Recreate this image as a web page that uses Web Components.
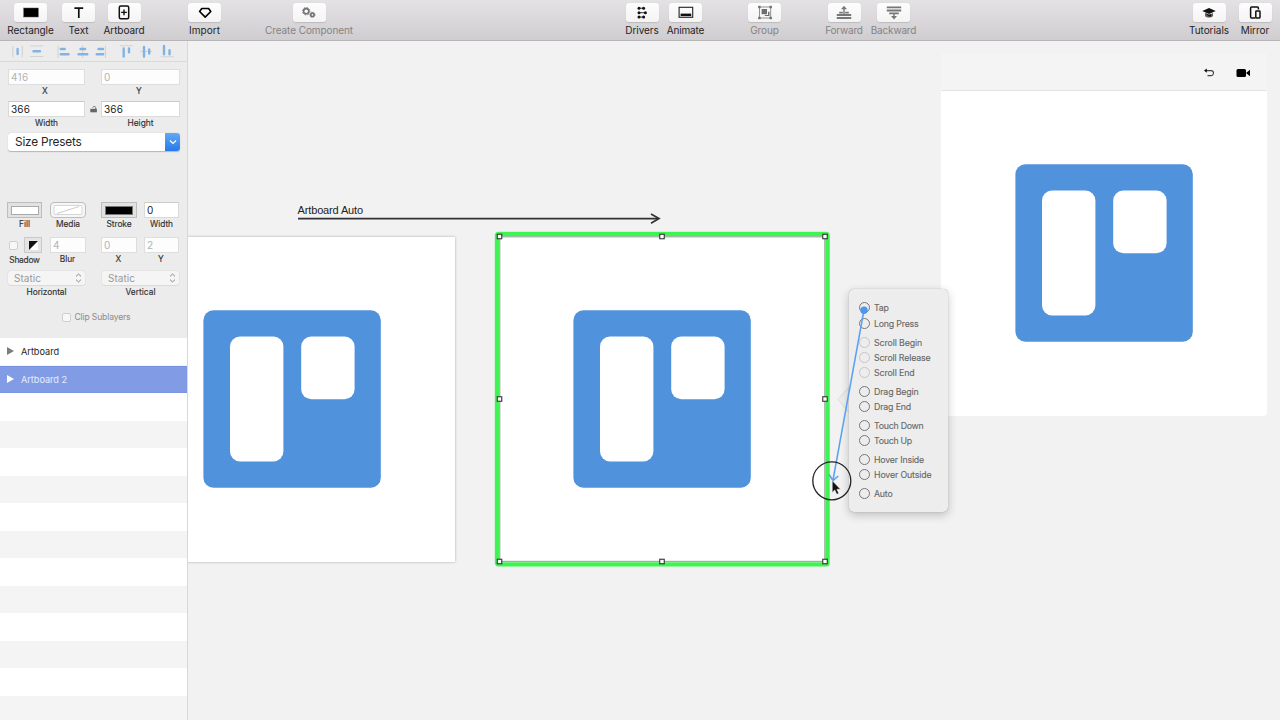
<!DOCTYPE html>
<html lang="en">
<head>
<meta charset="utf-8">
<title>Artboards</title>
<style>
    body {
        margin: 0;
        width: 1280px;
        height: 720px;
        overflow: hidden;
        background: #f2f2f2;
        font-family: Inter, "Liberation Sans", sans-serif;
        color: #262626;
    }
</style>
</head>
<body>
<design-app></design-app>

<script>
// text with a set width: the tracking is spread over the letters
class FitText extends HTMLElement {

    constructor() {
        super();
        this.root = this.attachShadow({mode: 'open'});
        this.root.innerHTML = `
        <style>
        :host {
            display: inline-block;
            white-space: nowrap;
        }
        span {
            display: inline-block;
        }
        </style>
        <span><slot></slot></span>
        `;
    }

    connectedCallback() {
        const span = this.root.querySelector('span');
        const target = Number(this.getAttribute('w'));
        const length = this.textContent.length;
        if (!target || !length) return;
        const spacing = (target - span.getBoundingClientRect().width) / length;
        span.style.letterSpacing = spacing.toFixed(3) + 'px';
    }
}

class ToolButton extends HTMLElement {

    constructor() {
        super();
        this.root = this.attachShadow({mode: 'open'});
    }

    connectedCallback() {
        this.root.innerHTML = `
        <style>
        :host {
            display: flex;
            flex-direction: column;
            align-items: center;
            flex: none;
            padding-top: 3px;
            color: #252325;
        }
        :host([dim]) {
            color: #858385;
        }
        .button {
            display: flex;
            align-items: center;
            justify-content: center;
            width: 33px;
            height: 19px;
            border-radius: 3px;
            background: linear-gradient(#fdfdfd, #f5f4f5);
            box-shadow: 0 0.5px 1px rgba(0, 0, 0, .13);
        }
        fit-text {
            margin-top: 2px;
            font-size: 10px;
            line-height: 13px;
        }
        </style>
        <div class="button"><slot></slot></div>
        <fit-text w="${this.getAttribute('text-width')}">${this.getAttribute('label')}</fit-text>
        `;
    }
}

class ToolBar extends HTMLElement {

    constructor() {
        super();
        this.root = this.attachShadow({mode: 'open'});
        this.root.innerHTML = `
        <style>
        :host {
            display: flex;
            box-sizing: border-box;
            height: 41px;
            border-bottom: 1px solid #b7b5b7;
            background: linear-gradient(#e4e2e4, #cfcdcf);
        }
        svg {
            display: block;
            width: 20px;
            height: 19px;
        }
        </style>
        <tool-button label="Rectangle" text-width="46.5" style="width:47px;margin-left:7px">
            <svg viewBox="0 0 20 19"><rect x="2.7" y="5" width="14.6" height="9" fill="#000" stroke="#555" stroke-width=".5"/></svg>
        </tool-button>
        <tool-button label="Text" text-width="20" style="width:33px;margin-left:8px">
            <svg viewBox="0 0 20 19"><path d="M5.4 5.1h8.8M9.8 5v10" fill="none" stroke="#111" stroke-width="1.7"/></svg>
        </tool-button>
        <tool-button label="Artboard" text-width="41" style="width:42px;margin-left:8px">
            <svg viewBox="0 0 20 19"><rect x="5.3" y="3" width="9.4" height="12.8" rx="1.5" fill="none" stroke="#111" stroke-width="1.5"/><path d="M7.1 9.4h5.8M10 6.5v5.8" stroke="#111" stroke-width="1.4"/></svg>
        </tool-button>
        <tool-button label="Import" text-width="31" style="width:33px;margin-left:43px">
            <svg viewBox="0 0 20 19"><path d="M6.8 5.5h6.8l2.2 3-5.6 5.6-5.6-5.6z" fill="none" stroke="#000" stroke-width="1.6" stroke-linejoin="round"/></svg>
        </tool-button>
        <tool-button dim label="Create Component" text-width="88" style="width:89px;margin-left:43.5px">
            <svg viewBox="0 0 20 19" fill="none" stroke="#747474"><circle cx="7.2" cy="8.2" r="2.6" stroke-width="1.6"/><circle cx="7.2" cy="8.2" r="3.7" stroke-width="1" stroke-dasharray="1.45 1.45"/><circle cx="13.4" cy="11.8" r="1.7" stroke-width="1.7"/><circle cx="13.4" cy="11.8" r="2.7" stroke-width=".8" stroke-dasharray="1.06 1.06"/></svg>
        </tool-button>
        <tool-button label="Drivers" text-width="33.5" style="width:34px;margin-left:271.5px">
            <svg viewBox="0 0 20 19"><path d="M6.5 5.2h5M6.5 9.7h7M6.5 14.1h5" stroke="#222" stroke-width=".9"/><g fill="#111"><circle cx="7" cy="5.2" r="1.5"/><circle cx="11.6" cy="5.2" r="1.5"/><circle cx="7" cy="9.7" r="1.5"/><circle cx="13.4" cy="9.7" r="1.5"/><circle cx="7" cy="14.1" r="1.5"/><circle cx="11.6" cy="14.1" r="1.5"/></g></svg>
        </tool-button>
        <tool-button label="Animate" text-width="37.5" style="width:38px;margin-left:7.5px">
            <svg viewBox="0 0 20 19"><rect x="3.1" y="4.3" width="13.6" height="10" fill="none" stroke="#222" stroke-width="1.1"/><rect x="4.6" y="10.6" width="10.6" height="2.5" fill="#111"/></svg>
        </tool-button>
        <tool-button dim label="Group" text-width="28.5" style="width:33px;margin-left:43.5px">
            <svg viewBox="0 0 20 19"><rect x="4.5" y="4" width="11.2" height="11" fill="none" stroke="#868686" stroke-width=".9"/><g fill="#6e6e6e"><rect x="3.2" y="2.8" width="2.4" height="2.4"/><rect x="14.5" y="2.8" width="2.4" height="2.4"/><rect x="3.2" y="13.8" width="2.4" height="2.4"/><rect x="14.5" y="13.8" width="2.4" height="2.4"/><rect x="6.6" y="6" width="5.4" height="5.2"/><path d="M13 8.7h1.5v4.4H9.8v-1.2H13z"/></g></svg>
        </tool-button>
        <tool-button dim label="Forward" text-width="37.5" style="width:38px;margin-left:44px">
            <svg viewBox="0 0 20 19"><path d="M5.2 9.7h3.6M11.2 9.7h3.6M2.8 12h14.4M2.8 15h14.4" stroke="#777" stroke-width="1.8"/><path d="M10 12V5" stroke="#777" stroke-width="1.4"/><path d="M7 6.3L10 2.8l3 3.5z" fill="#777"/></svg>
        </tool-button>
        <tool-button dim label="Backward" text-width="45.5" style="width:46px;margin-left:7.5px">
            <svg viewBox="0 0 20 19"><path d="M2.8 4.3h14.4M2.8 7.5h14.4M5.2 10.3h9.6" stroke="#777" stroke-width="1.8"/><path d="M10 10v5" stroke="#777" stroke-width="1.4"/><path d="M7 13L10 16.4l3-3.4z" fill="#777"/></svg>
        </tool-button>
        <tool-button label="Tutorials" text-width="40" style="width:41px;margin-left:272px">
            <svg viewBox="0 0 20 19" fill="#111"><path d="M3.3 8L10 5l6.7 3L10 11z"/><path d="M6 10.1l4 1.7 4-1.7V13c-1.8 2-6.2 2-8 0z" opacity=".65"/><path d="M6 10l4 1.7 2-.8.3 2.6-2.5-.1z"/></svg>
        </tool-button>
        <tool-button label="Mirror" text-width="28.5" style="width:33px;margin-left:9px">
            <svg viewBox="0 0 20 19" fill="none" stroke="#111" stroke-width="1.5"><path d="M10.4 15H6.6a1 1 0 0 1-1-1V4.9a1 1 0 0 1 1-1h5.8a1 1 0 0 1 1 1v1.7"/><rect x="10.8" y="8.1" width="4.2" height="6.8" rx=".6"/></svg>
        </tool-button>
        `;
    }
}

class AlignBar extends HTMLElement {

    constructor() {
        super();
        this.root = this.attachShadow({mode: 'open'});
        this.root.innerHTML = `
        <style>
        :host {
            display: block;
            box-sizing: border-box;
            height: 21px;
            border-bottom: 1px solid #d9d9d9;
        }
        svg {
            display: block;
        }
        </style>
        <svg width="187" height="20" fill="none" stroke-linecap="round">
            <g stroke="#d2d2d2" stroke-width="1.1">
                <path d="M12.8 5v11M22.3 5v11M30.5 5h12.5M30.5 15.5h12.5M58 5v11.5M82.7 4.5v12M105.5 5v11.5M120.5 4.7h12M140.5 10.5h11.5M161 15.7h12.5"/>
            </g>
            <g stroke="#83b3e2" stroke-width="2.4">
                <path d="M17.6 8v5M33.5 10.3h6.5M60.8 8h3.9M60.8 13.2h7.7M80.5 8h4.6M78.5 13.2h8.8M98.5 8h4.5M96.7 13.2h6.5M123.7 7.5v8M129 7.5v3.7M144 6v9.6M149.2 8.5v4M164 5v8.2M169.5 9.3v3.9"/>
            </g>
        </svg>
        `;
    }
}

// input box with its caption below
class FieldBox extends HTMLElement {

    constructor() {
        super();
        this.root = this.attachShadow({mode: 'open'});
    }

    connectedCallback() {
        const caption = this.getAttribute('caption') || '';
        this.root.innerHTML = `
        <style>
        :host {
            display: flex;
            flex-direction: column;
            align-items: center;
        }
        .box {
            display: flex;
            align-items: center;
            box-sizing: border-box;
            width: 100%;
            height: 16px;
            padding-left: 2px;
            border: 1px solid #dadada;
            border-top-color: #cbcbcb;
            background: #fff;
            font-size: 10px;
            line-height: 14px;
            color: #222;
        }
        :host([dim]) .box {
            color: #b3b3b3;
            background: #fdfdfd;
            border-color: #dedede;
        }
        :host([well]) .box {
            justify-content: center;
            padding: 0;
            border-color: #bdbdbd;
            background: #e2e2e2;
        }
        :host([round]) .box {
            border-radius: 4px;
            background: #f6f6f6;
        }
        .caption {
            height: 12px;
            padding-right: var(--caption-shift, 0);
            font-size: 8.4px;
            line-height: 12px;
            color: #333;
            -webkit-text-stroke: .15px #333;
        }
        </style>
        <div class="box"><slot></slot></div>
        <div class="caption"><fit-text w="${this.getAttribute('caption-width')}">${caption}</fit-text></div>
        `;
    }
}

class PopupButton extends HTMLElement {

    constructor() {
        super();
        this.root = this.attachShadow({mode: 'open'});
    }

    connectedCallback() {
        this.root.innerHTML = `
        <style>
        :host {
            display: flex;
            flex-direction: column;
            align-items: center;
        }
        .box {
            display: flex;
            align-items: center;
            justify-content: space-between;
            box-sizing: border-box;
            width: 100%;
            height: 14px;
            margin-bottom: 1px;
            padding: 0 3px 0 6px;
            border-radius: 3px;
            background: #f5f5f5;
            box-shadow: 0 0 0 .5px #dcdcdc, 0 .5px .5px #c4c4c4;
            font-size: 10px;
            line-height: 14px;
            color: #999;
        }
        .caption {
            height: 12px;
            font-size: 8.4px;
            line-height: 12px;
            color: #333;
            -webkit-text-stroke: .15px #333;
        }
        </style>
        <div class="box">
            <fit-text w="27">Static</fit-text>
            <svg width="7" height="10" viewBox="0 0 7 10" fill="none" stroke="#888" stroke-width="1"><path d="M1 3.4L3.5 1 6 3.4M1 6.6L3.5 9 6 6.6"/></svg>
        </div>
        <div class="caption"><fit-text w="${this.getAttribute('caption-width')}">${this.getAttribute('caption')}</fit-text></div>
        `;
    }
}

class SideInspector extends HTMLElement {

    constructor() {
        super();
        this.root = this.attachShadow({mode: 'open'});
        this.root.innerHTML = `
        <style>
        :host {
            display: block;
            height: 297px;
            background: #ececec;
        }
        .fields {
            padding: 7px 7px 0 8px;
        }
        .pair {
            display: grid;
            grid-template-columns: 77px 16px 79px;
            margin-bottom: 4px;
        }
        .origin {
            --caption-shift: 3px;
        }
        .pair svg {
            margin: 3px 0 0 4px;
        }
        .presets {
            display: flex;
            width: 172px;
            height: 18px;
            border-radius: 3px;
            background: #fff;
            box-shadow: 0 .5px 1px #b5b5b5;
            overflow: hidden;
            font-size: 11.8px;
            line-height: 18px;
        }
        .presets fit-text {
            flex: 1;
            padding-left: 7px;
        }
        .arrow {
            display: flex;
            align-items: center;
            justify-content: center;
            width: 15px;
            background: linear-gradient(#62a9f4, #2879ea);
        }
        .quad {
            display: grid;
            grid-template-columns: 35px 36px 36px 35px;
            column-gap: 7px;
            height: 35px;
        }
        .quad > :nth-child(3) {
            margin-left: 8px;
            margin-right: -8px;
        }
        .quad > :nth-child(4) {
            margin-left: 8px;
            margin-right: -8px;
        }
        .paint {
            margin-top: 51px;
        }
        .shadow {
            display: flex;
            flex-direction: column;
            align-items: center;
            margin: 0 1px 0 -1px;
            font-size: 8.4px;
            line-height: 14px;
            color: #333;
            -webkit-text-stroke: .15px #333;
        }
        .controls {
            display: flex;
            align-items: center;
            justify-content: space-between;
            box-sizing: border-box;
            width: 100%;
            height: 16px;
            padding-left: 2px;
        }
        .check {
            box-sizing: border-box;
            width: 9px;
            height: 9px;
            border: 1px solid #d0d0d0;
            border-radius: 2px;
            background: #f7f7f7;
        }
        .swatch {
            display: flex;
            align-items: center;
            justify-content: center;
            box-sizing: border-box;
            width: 18px;
            height: 16px;
            border: 1px solid #c9c9c9;
            background: #e4e4e4;
        }
        .popups {
            display: grid;
            grid-template-columns: 77px 77px;
            column-gap: 17px;
            margin-top: -1px;
        }
        .clip {
            display: flex;
            align-items: center;
            justify-content: center;
            gap: 3px;
            margin: 13px -5px 0 0;
            font-size: 8.6px;
            line-height: 12px;
            color: #8b8b8b;
        }
        </style>
        <align-bar></align-bar>
        <div class="fields">
            <div class="pair origin">
                <field-box dim caption="X" caption-width="6"><fit-text w="17.5">416</fit-text></field-box>
                <span></span>
                <field-box dim caption="Y" caption-width="6">0</field-box>
            </div>
            <div class="pair">
                <field-box caption="Width" caption-width="23"><fit-text w="19">366</fit-text></field-box>
                <svg width="9" height="10" viewBox="0 0 9 10"><path d="M1.3 4.8h6.6v3.5H1.3z" fill="#666"/><path d="M3.8 3.6c0-1.6 2.9-1.6 2.9 0V5" fill="none" stroke="#777"/></svg>
                <field-box caption="Height" caption-width="26"><fit-text w="19">366</fit-text></field-box>
            </div>
            <div class="presets">
                <fit-text w="66.5">Size Presets</fit-text>
                <div class="arrow"><svg width="8" height="6" viewBox="0 0 8 6"><path d="M1 1.5L4 4.4l3-2.9" fill="none" stroke="#fff" stroke-width="1.3"/></svg></div>
            </div>
            <div class="quad paint">
                <field-box well caption="Fill" caption-width="11" style="margin:0 1px 0 -1px"><svg width="28" height="9"><rect x=".5" y=".5" width="27" height="8" fill="#fff" stroke="#aaa"/></svg></field-box>
                <field-box well round caption="Media" caption-width="24"><svg width="30" height="10"><rect x="1" y=".5" width="28" height="9" rx="1" fill="#fff" stroke="#d6d6d6"/><path d="M4 8.5L26 1.5" stroke="#ccc"/></svg></field-box>
                <field-box well caption="Stroke" caption-width="25"><svg width="28" height="9"><rect x=".5" y=".5" width="27" height="8" fill="#000" stroke="#777"/></svg></field-box>
                <field-box caption="Width" caption-width="23">0</field-box>
            </div>
            <div class="quad" style="--caption-shift:1px">
                <div class="shadow">
                    <div class="controls">
                        <div class="check"></div>
                        <div class="swatch"><svg width="9" height="9"><path d="M0 0h9v9H0z" fill="#fff"/><path d="M0 0h9L0 9z" fill="#111"/></svg></div>
                    </div>
                    <fit-text w="30.5">Shadow</fit-text>
                </div>
                <field-box dim caption="Blur" caption-width="15.5">4</field-box>
                <field-box dim caption="X" caption-width="6">0</field-box>
                <field-box dim caption="Y" caption-width="6">2</field-box>
            </div>
            <div class="popups">
                <popup-button caption="Horizontal" caption-width="40"></popup-button>
                <popup-button caption="Vertical" caption-width="30"></popup-button>
            </div>
            <div class="clip"><span class="check"></span><fit-text w="56">Clip Sublayers</fit-text></div>
        </div>
        `;
    }
}

class LayerList extends HTMLElement {

    constructor() {
        super();
        this.root = this.attachShadow({mode: 'open'});
        this.root.innerHTML = `
        <style>
        :host {
            display: block;
            height: 382px;
            background: repeating-linear-gradient(#fff 0 27.5px, #f4f4f4 27.5px 55px);
            overflow: hidden;
        }
        .row {
            display: flex;
            align-items: center;
            gap: 7px;
            box-sizing: border-box;
            height: 27.5px;
            padding-left: 7px;
            font-size: 9.2px;
        }
        .row svg {
            margin-top: -1px;
        }
        .selected {
            background: #819ce5;
            color: #e6ecfc;
            border-top: 1px solid #7893e0;
            border-bottom: 1px solid #7b96e0;
        }
        </style>
        <div class="row">
            <svg width="7" height="8"><path d="M0 0l7 4-7 4z" fill="#7d7d7d"/></svg>
            <fit-text w="38">Artboard</fit-text>
        </div>
        <div class="row selected">
            <svg width="7" height="8"><path d="M0 0l7 4-7 4z" fill="#fff"/></svg>
            <fit-text w="46">Artboard 2</fit-text>
        </div>
        `;
    }
}

class BoardLogo extends HTMLElement {

    constructor() {
        super();
        this.root = this.attachShadow({mode: 'open'});
        this.root.innerHTML = `
        <style>
        :host {
            display: block;
            width: 178px;
            height: 178px;
        }
        svg {
            display: block;
        }
        </style>
        <svg width="178" height="178">
            <rect x=".4" y=".2" width="177.4" height="177.6" rx="10" fill="#5093dc"/>
            <rect x="27" y="26.6" width="53.4" height="124.8" rx="10" fill="#fff"/>
            <rect x="98.2" y="26.6" width="53.4" height="62.6" rx="10" fill="#fff"/>
        </svg>
        `;
    }
}

class ArtBoard extends HTMLElement {

    constructor() {
        super();
        this.root = this.attachShadow({mode: 'open'});
        this.root.innerHTML = `
        <style>
        :host {
            display: flex;
            align-items: center;
            justify-content: center;
            box-sizing: border-box;
            background: #fff;
            box-shadow: 0 0 2.5px rgba(0, 0, 0, .3);
        }
        </style>
        <slot></slot>
        `;
    }
}

class TriggerMenu extends HTMLElement {

    constructor() {
        super();
        this.root = this.attachShadow({mode: 'open'});
        const groups = [
            [['Tap', 14.5, 16], ['Long Press', 44.5, 16]],
            [['Scroll Begin', 48, 14.7], ['Scroll Release', 56.5, 14.7], ['Scroll End', 40.5, 14.7]],
            [['Drag Begin', 44.5, 15.2], ['Drag End', 37, 15.2]],
            [['Touch Down', 49.5, 15], ['Touch Up', 38, 15]],
            [['Hover Inside', 50, 15], ['Hover Outside', 57.5, 15]],
            [['Auto', 18.5, 15]]
        ];
        const html = groups.map((group, i) => `
            <div class="group${i === 1 ? ' off' : ''}">
                ${group.map(([name, w, h]) => `<div class="row" style="height:${h}px"><i></i><fit-text w="${w}">${name}</fit-text></div>`).join('')}
            </div>`).join('');
        this.root.innerHTML = `
        <style>
        :host {
            display: flex;
            flex-direction: column;
            gap: 4.2px;
            box-sizing: border-box;
            width: 98.5px;
            height: 223px;
            padding: 10.6px 0 0 10px;
            border-radius: 5px;
            background: #ededed;
            box-shadow: 0 0 1px rgba(0, 0, 0, .35), 0 3px 10px rgba(0, 0, 0, .22);
            font-size: 8.8px;
            color: #666;
            -webkit-text-stroke: .1px #666;
        }
        .row {
            display: flex;
            align-items: center;
            gap: 4px;
        }
        i {
            box-sizing: border-box;
            width: 11px;
            height: 11px;
            border: 1px solid #777;
            border-radius: 50%;
        }
        .off i {
            border-color: #c9c4c9;
        }
        </style>
        ${html}
        `;
    }
}

class PreviewPane extends HTMLElement {

    constructor() {
        super();
        this.root = this.attachShadow({mode: 'open'});
        this.root.innerHTML = `
        <style>
        :host {
            display: flex;
            flex-direction: column;
            width: 326px;
            height: 362px;
            border-radius: 4px;
            background: #fff;
            overflow: hidden;
        }
        .bar {
            display: flex;
            align-items: center;
            justify-content: flex-end;
            gap: 21px;
            box-sizing: border-box;
            height: 37px;
            padding: 1px 16px 0 0;
            border-bottom: 1px solid #e4e4e4;
            background: #f4f4f4;
        }
        .stage {
            display: flex;
            flex: 1;
            align-items: center;
            justify-content: center;
            margin-top: -1px;
        }
        </style>
        <div class="bar">
            <svg width="12" height="11"><path d="M2 3.6h6a2.5 2.5 0 0 1 0 5H4.5" fill="none" stroke="#444" stroke-width="1.1"/><path d="M1 3.6L3.8 1.4v4.4z" fill="#111"/></svg>
            <svg width="15" height="10"><rect x=".5" y="1" width="9.5" height="8" rx="1.5" fill="#000"/><path d="M10 5l4-3.2v6.4z" fill="#000"/></svg>
        </div>
        <div class="stage"><board-logo></board-logo></div>
        `;
    }
}

class DesignCanvas extends HTMLElement {

    constructor() {
        super();
        this.root = this.attachShadow({mode: 'open'});
        const handles = [
            [499.5, 236.5], [662, 236.5], [825, 236.5],
            [499.5, 399], [825, 399],
            [499.5, 561.5], [662, 561.5], [825, 561.5]
        ].map(([x, y]) => `<rect x="${x - 2.25}" y="${y - 2.25}" width="4.5" height="4.5"/>`).join('');
        // children are placed in window coordinates, the host is shifted to suit
        this.root.innerHTML = `
        <style>
        :host {
            display: block;
            position: relative;
            flex: 1;
            overflow: hidden;
            background: #f2f2f2;
        }
        .plane {
            position: absolute;
            left: -188px;
            top: -41px;
            width: 1280px;
            height: 720px;
        }
        .plane > * {
            position: absolute;
        }
        .first {
            left: 129.5px;
            top: 236.5px;
            width: 325.5px;
            height: 325px;
        }
        .second {
            left: 499.5px;
            top: 236.5px;
            width: 325.5px;
            height: 325px;
            box-shadow: none;
        }
        .transition {
            left: 297.5px;
            top: 203px;
            font: 11px/14px "Liberation Sans", Arial, sans-serif;
            color: #222;
        }
        preview-pane {
            left: 941px;
            top: 54px;
        }
        trigger-menu {
            left: 849px;
            top: 288.5px;
        }
        .overlay {
            left: 0;
            top: 0;
        }
        </style>
        <div class="plane">
            <art-board class="first"><board-logo></board-logo></art-board>
            <art-board class="second"><board-logo></board-logo></art-board>
            <preview-pane></preview-pane>
            <svg class="overlay" width="1280" height="720" fill="none">
                <rect x="497.3" y="234.3" width="330" height="329.8" rx="1.5" stroke="#a5f5ad" stroke-width="5.4"/>
                <rect x="497" y="234" width="330.6" height="330.4" rx="1.5" stroke="#3df452" stroke-width="3.9"/>
                <rect x="499.8" y="236.8" width="325" height="324.6" stroke="#a2ada3" stroke-width="1.2"/>
                <g fill="#fff" stroke="#333" stroke-width="1.1">${handles}</g>
                <path d="M298 218.6h360" stroke="#333" stroke-width="1.7"/>
                <path d="M651 214l8 4.6-8 4.6" stroke="#333" stroke-width="1.7"/>
                <path d="M849.5 386.5L838 399.5l11.5 13.5z" fill="#ededed" stroke="#dcdcdc" stroke-width="1"/>
            </svg>
            <fit-text class="transition" w="65.5">Artboard Auto</fit-text>
            <trigger-menu></trigger-menu>
            <svg class="overlay" width="1280" height="720" fill="none">
                <path d="M864 310L833 480" stroke="#5ba0f0" stroke-width="1.5"/>
                <circle cx="864" cy="310.2" r="3.7" fill="#4b98ee"/>
                <path d="M829 474.5l4 6 5.2-4.5" stroke="#5ba0f0" stroke-width="1.6"/>
                <circle cx="831.8" cy="480.8" r="19" stroke="#222" stroke-width="1.3"/>
                <path d="M832.2 480.6v11.8l2.6-2.4 1.9 4.3 2.1-.9-1.9-4.1h3.6z" fill="#111" stroke="#eee" stroke-width=".6"/>
            </svg>
        </div>
        `;
    }
}

class DesignApp extends HTMLElement {

    constructor() {
        super();
        this.root = this.attachShadow({mode: 'open'});
        this.root.innerHTML = `
        <style>
        :host {
            display: flex;
            flex-direction: column;
            height: 720px;
        }
        .main {
            display: flex;
            flex: 1;
            min-height: 0;
        }
        .side {
            width: 187px;
            flex: none;
            border-right: 1px solid #d8d8d8;
        }
        </style>
        <tool-bar></tool-bar>
        <div class="main">
            <div class="side">
                <side-inspector></side-inspector>
                <layer-list></layer-list>
            </div>
            <design-canvas></design-canvas>
        </div>
        `;
    }
}

customElements.define('tool-button', ToolButton);
customElements.define('tool-bar', ToolBar);
customElements.define('align-bar', AlignBar);
customElements.define('field-box', FieldBox);
customElements.define('popup-button', PopupButton);
customElements.define('side-inspector', SideInspector);
customElements.define('layer-list', LayerList);
customElements.define('board-logo', BoardLogo);
customElements.define('art-board', ArtBoard);
customElements.define('trigger-menu', TriggerMenu);
customElements.define('preview-pane', PreviewPane);
customElements.define('design-canvas', DesignCanvas);
customElements.define('design-app', DesignApp);
customElements.define('fit-text', FitText);
</script>
</body>
</html>
